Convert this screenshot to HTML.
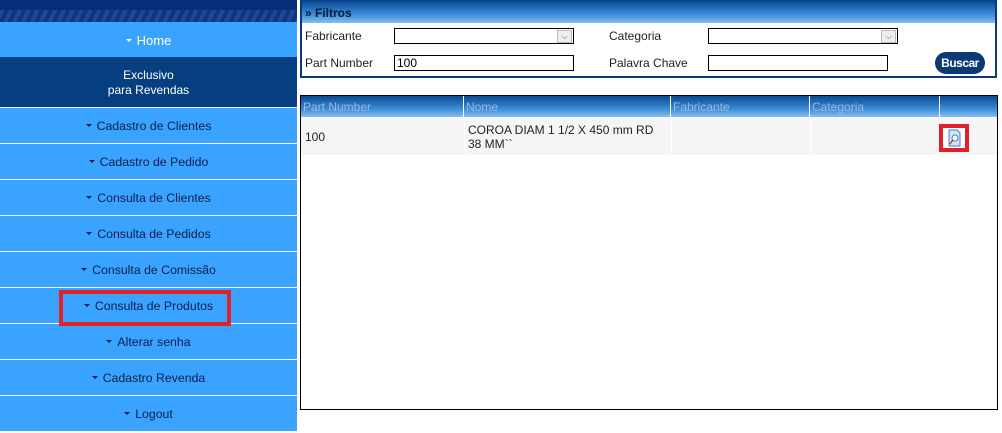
<!DOCTYPE html>
<html><head><meta charset="utf-8"><style>
*{box-sizing:border-box;margin:0;padding:0}
body{width:1002px;height:433px;background:#fff;font-family:"Liberation Sans",Arial,sans-serif;font-size:12px;position:relative;overflow:hidden}
.abs{position:absolute}
.stripe{left:0;top:0;width:297px;height:22px;background:#082d78;overflow:hidden}
.stripe div{position:absolute;left:0;top:10px;width:297px;height:12px;background:repeating-linear-gradient(115deg,#1e4796 0 4px,#0e3482 4px 8px)}
.home{left:0;top:22px;width:297px;height:35px;background:#3aa2ff;color:#fff;text-align:center;line-height:37px;font-size:13px}
.excl{left:0;top:57px;width:297px;height:50px;background:#053f80;color:#fff;text-align:center;font-size:12px;line-height:15px;padding-top:11px}
.item{left:0;width:297px;height:35px;background:#3aa2ff;color:#0c1f4e;text-align:center;line-height:37px;font-size:12.3px}
.tri{display:inline-block;width:0;height:0;border-left:3px solid transparent;border-right:3px solid transparent;border-top:3px solid currentColor;vertical-align:middle;margin-right:5px;position:relative;top:-1px}
.red{border:4px solid #e0202a}
.panel{left:300px;top:0;width:697px;height:78px;border:2px solid #0b3a7c;border-top:1px solid #0b3a7c}
.hdr{background:linear-gradient(#0a4a96,#2f7fcf 55%,#7ab3e8)}
.lbl{font-size:12px;color:#222}
.inp{border:1px solid #000;background:#fff;height:16px}
.sel .arr{position:absolute;right:1px;top:1px;width:15px;height:13px;background:#eee;border:1px solid #bbb;font-size:8px;text-align:center;line-height:11px;color:#555}
.th{color:#9cb8da;font-size:12px;line-height:23px;padding-left:2px;border-right:1px solid #fff}
</style></head><body>
<div class="abs stripe"><div></div></div>
<div class="abs home"><span class="tri" style="color:#fff"></span>Home</div>
<div class="abs excl">Exclusivo<br>para Revendas</div>
<div class="abs item" style="top:108px"><span class="tri"></span>Cadastro de Clientes</div>
<div class="abs item" style="top:144px"><span class="tri"></span>Cadastro de Pedido</div>
<div class="abs item" style="top:180px"><span class="tri"></span>Consulta de Clientes</div>
<div class="abs item" style="top:216px"><span class="tri"></span>Consulta de Pedidos</div>
<div class="abs item" style="top:252px"><span class="tri"></span>Consulta de Comissão</div>
<div class="abs item" style="top:288px"><span class="tri"></span>Consulta de Produtos</div>
<div class="abs item" style="top:324px"><span class="tri"></span>Alterar senha</div>
<div class="abs item" style="top:360px"><span class="tri"></span>Cadastro Revenda</div>
<div class="abs item" style="top:396px"><span class="tri"></span>Logout</div>
<div class="abs red" style="left:59px;top:290px;width:172px;height:36px"></div>

<div class="abs panel">
 <div class="hdr" style="height:22px;font-weight:bold;font-size:12px;line-height:24px;padding-left:3px;background:linear-gradient(#0b4a94,#3a8ad6 60%,#86bdef);color:#0b1a3a">» Filtros</div>
</div>
<div class="abs lbl" style="left:305px;top:29px">Fabricante</div>
<div class="abs inp sel" style="left:394px;top:28px;width:180px"><div class="arr">⌵</div></div>
<div class="abs lbl" style="left:609px;top:29px">Categoria</div>
<div class="abs inp sel" style="left:708px;top:28px;width:190px"><div class="arr">⌵</div></div>
<div class="abs lbl" style="left:305px;top:56px">Part Number</div>
<div class="abs inp" style="left:394px;top:55px;width:180px;font-size:12px;line-height:15px;padding-left:2px">100</div>
<div class="abs lbl" style="left:609px;top:56px">Palavra Chave</div>
<div class="abs inp" style="left:708px;top:55px;width:180px"></div>
<div class="abs" style="left:935px;top:52px;width:50px;height:22px;border-radius:11px;background:#0a3a74;color:#fff;font-weight:bold;font-size:12px;text-align:center;line-height:22px;letter-spacing:-0.5px">Buscar</div>

<div class="abs" style="left:300px;top:95px;width:698px;height:315px;border:1px solid #000"></div>
<div class="abs hdr" style="left:301px;top:96px;width:696px;height:21px;display:flex;background:linear-gradient(#0b4a94,#3a8ad6 60%,#86bdef)">
 <div class="th" style="width:163px">Part Number</div>
 <div class="th" style="width:207px">Nome</div>
 <div class="th" style="width:139px">Fabricante</div>
 <div class="th" style="width:130px">Categoria</div>
 <div class="th" style="width:57px;border:0"></div>
</div>
<div class="abs" style="left:301px;top:118px;width:696px;height:37px;background:#f5f5f5"></div>
<div class="abs" style="left:464px;top:118px;width:1px;height:37px;background:#fff"></div>
<div class="abs" style="left:671px;top:118px;width:1px;height:37px;background:#fff"></div>
<div class="abs" style="left:810px;top:118px;width:1px;height:37px;background:#fff"></div>
<div class="abs" style="left:940px;top:118px;width:1px;height:37px;background:#fff"></div>
<div class="abs lbl" style="left:305px;top:130px">100</div>
<div class="abs lbl" style="left:468px;top:123px;line-height:14px">COROA DIAM 1 1/2 X 450 mm RD<br>38 MM``</div>
<div class="abs red" style="left:939px;top:124px;width:30px;height:28px;border-width:4px;background:#fff">
 <svg width="22" height="20" viewBox="0 0 22 20" style="position:absolute;left:0;top:0"><path d="M6 2h8l3 3v13H6z" fill="#cfe3fb" stroke="#4a7bc0"/><circle cx="12" cy="10" r="3" fill="#fff" stroke="#4a7bc0"/><path d="M10 12l-3 4" stroke="#b05020" stroke-width="1.5"/></svg>
</div>
</body></html>
